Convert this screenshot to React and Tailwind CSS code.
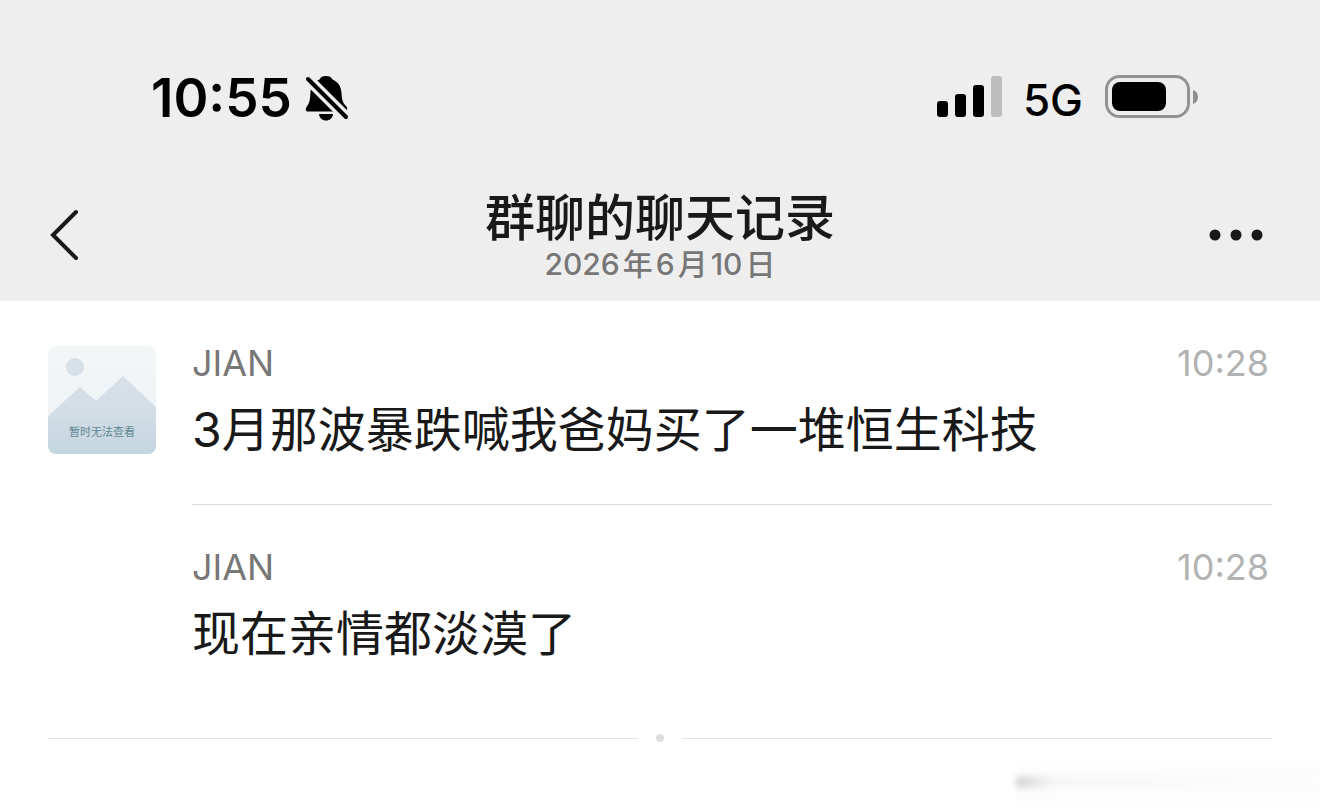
import React from 'react';

const messages = [
  { id: 1, name: 'JIAN', time: '10:28', text: '3月那波暴跌喊我爸妈买了一堆恒生科技', avatar: true },
  { id: 2, name: 'JIAN', time: '10:28', text: '现在亲情都淡漠了', avatar: false },
];

const MutedBell = () => (
  <svg viewBox="0 0 46 48" className="w-[46px] h-12" aria-label="Silent mode">
    <path
      d="M22 2C19 2 16.500 3 15.500 5.500C10 8 7 12 6.500 18C6 27 5.500 29 2.500 33C1 36 2 37.500 4 37.500H40C43 37.500 44 35.500 42.500 32.500C39 29 38 27 37.500 19C37 12 34 8 28.500 5.500C27.500 3 25 2 22 2Z"
      fill="#000"
    />
    <path d="M15 40H29C28.500 44 26 46.500 22 46.500C18 46.500 15.500 44 15 40Z" fill="#000" />
    <path d="M0 1L46 47" stroke="#eee" strokeWidth="11" />
    <path d="M4 5L42 43" stroke="#000" strokeWidth="4" strokeLinecap="round" />
  </svg>
);

const Signal = () => (
  <svg viewBox="0 0 66 44" className="w-[66px] h-11" aria-label="Signal">
    <rect x="0" y="25" width="11" height="16" rx="3" />
    <rect x="18" y="18" width="11" height="23" rx="3" />
    <rect x="36" y="9" width="11" height="32" rx="3" />
    <rect x="54" y="0" width="11" height="41" rx="3" fill="#bebebe" />
  </svg>
);

const Battery = () => (
  <svg viewBox="0 0 94 46" className="w-[94px] h-[46px]" aria-label="Battery">
    <rect x="1.500" y="1.500" width="82" height="40" rx="13" fill="none" stroke="#939393" strokeWidth="3" />
    <rect x="7" y="7" width="54" height="29" rx="8" />
    <path d="M88 15C91 16 93 18.500 93 22C93 25.500 91 28 88 29Z" fill="#8e8e8e" />
  </svg>
);

const Avatar = () => (
  <div className="relative size-[108px] rounded-lg overflow-hidden">
    <svg viewBox="0 0 108 108" className="size-full" aria-hidden="true">
      <defs>
        <linearGradient id="sky" x1="0" y1="0" x2="0" y2="1">
          <stop offset="0" stopColor="#f3f6f7" />
          <stop offset="1" stopColor="#eef2f5" />
        </linearGradient>
        <linearGradient id="hill" x1="0" y1="0" x2="0" y2="1">
          <stop offset="0" stopColor="#d9e0e8" />
          <stop offset="0.500" stopColor="#d2dde5" />
          <stop offset="1" stopColor="#c3d5df" />
        </linearGradient>
      </defs>
      <rect width="108" height="108" fill="url(#sky)" />
      <circle cx="27" cy="21" r="9" fill="#d8e1e7" />
      <path d="M0 70L32 41L48 55L75 30L108 61V108H0Z" fill="url(#hill)" />
    </svg>
    <span className="absolute inset-x-0 bottom-3 text-center text-[11px] leading-5 text-[#5f8792]">暂时无法查看</span>
  </div>
);

const App = () => {
  return (
    <div className="min-h-screen bg-white font-['Inter','Noto_Sans_CJK_SC',sans-serif] text-[#191919]">
      <header className="bg-[#eeeeee] pt-16 pb-[21px]">
        {/* Status bar */}
        <div className="flex items-center justify-between pl-[151px] pr-[121px] h-[68px] text-black">
          <div className="flex items-center gap-3">
            <span className="text-[53px] leading-[68px] font-semibold">10:55</span>
            <MutedBell />
          </div>
          <div className="flex items-center gap-5">
            <Signal />
            <span className="text-[44px] leading-[68px] pt-1 pr-0.5 font-medium">5G</span>
            <Battery />
          </div>
        </div>

        {/* Title bar */}
        <div className="flex items-center justify-between px-12 mt-14">
          <button type="button" aria-label="Back" className="w-16 h-16">
            <svg viewBox="0 0 32 52" className="w-8 h-[52px]">
              <path d="M28 4L5 27L28 50" fill="none" stroke="#191919" strokeWidth="4" strokeLinecap="round" />
            </svg>
          </button>
          <div className="text-center">
            <h1 className="text-[50px] leading-[60px] font-medium">群聊的聊天记录</h1>
            <p className="flex justify-center gap-[3px] text-[30px] leading-8 text-[#777777] font-medium">
              <span>2026</span>
              <span>年</span>
              <span>6</span>
              <span>月</span>
              <span>10</span>
              <span>日</span>
            </p>
          </div>
          <button type="button" aria-label="More" className="w-16 h-16 flex items-center justify-end">
            <svg viewBox="0 0 64 16" className="w-16 h-4" fill="#191919">
              <circle cx="7" cy="9" r="5.500" />
              <circle cx="28" cy="9" r="5.500" />
              <circle cx="49" cy="9" r="5.500" />
            </svg>
          </button>
        </div>
      </header>

      <main className="px-12">
        <ul>
          {messages.map((m) => (
            <li key={m.id} className="flex gap-9 pt-[45px]">
              <div className="w-[108px] shrink-0">{m.avatar && <Avatar />}</div>
              <div className="flex-1 pb-10 border-b border-[#d9d9d9] in-[li:last-child]:border-transparent">
                <div className="flex justify-between text-[36px] leading-[34px]">
                  <span className="text-[#777777]">{m.name}</span>
                  <time className="text-[#b2b2b2] pr-[3px]">{m.time}</time>
                </div>
                <p className="mt-4 text-[48px] leading-[68px]">{m.text}</p>
              </div>
            </li>
          ))}
        </ul>

        {/* End of list */}
        <div className="flex items-center gap-[18px] mt-[25px]">
          <span className="flex-1 h-px bg-[#e3e3e3]" />
          <span className="size-2 rounded-full bg-[#dedede]" />
          <span className="flex-1 h-px bg-[#e3e3e3]" />
        </div>
      </main>

      {/* Faint smudge in the corner */}
      <div className="flex justify-end mt-5 overflow-hidden">
        <div className="w-[304px] h-10 flex items-center bg-[#fdfdfd]">
          <span className="w-full h-3 blur-[3px] bg-linear-to-r from-[#d4d4d4] via-[#f6f6f6] via-12% to-[#fdfdfd]" />
        </div>
      </div>
    </div>
  );
};

export default App;
